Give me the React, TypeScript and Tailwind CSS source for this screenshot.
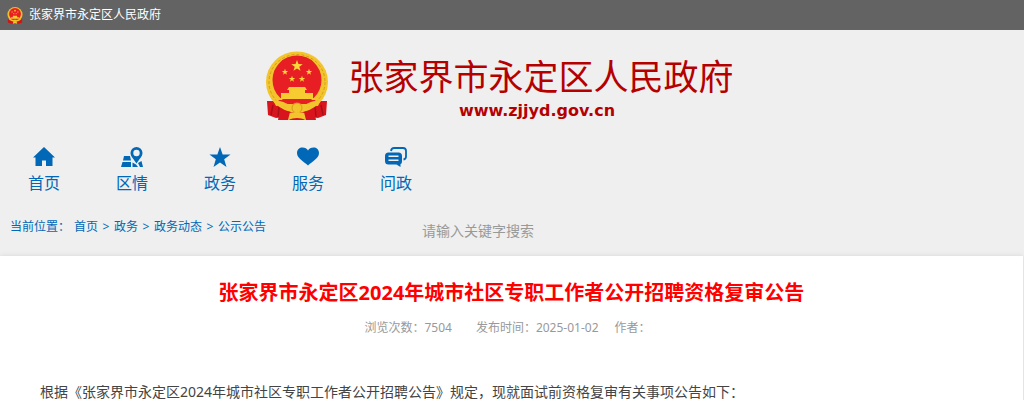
const STAR = "M0 -10 L2.4 -3.2 L9.6 -3.1 L3.8 1.2 L5.9 8.1 L0 4 L-5.9 8.1 L-3.8 1.2 L-9.6 -3.1 L-2.4 -3.2 Z";

const Emblem = ({ className }: { className: string }) => (
    <svg viewBox="0 0 62 70" className={className} aria-hidden="true">
        <path d="M1 50 L61 50 L60 64 L52 67 L44 66 L38 69 L24 69 L18 66 L10 67 L2 64 Z" fill="#d8141c" />
        <path d="M7 54 L5 64 M13 56 L12 66 M49 56 L50 66 M55 54 L57 64" stroke="#a80f16" strokeWidth="1.5" />
        <ellipse cx="31" cy="31" rx="31" ry="30.5" fill="#f3c52c" />
        <ellipse cx="31" cy="31" rx="28" ry="27.5" fill="none" stroke="#d99a1c" strokeWidth="1" strokeDasharray="3 2" />
        <ellipse cx="31" cy="29" rx="24.5" ry="24.5" fill="#e71f24" />
        <path d={STAR} transform="translate(31 15) scale(.6)" fill="#fbd93a" />
        <path d={STAR} transform="translate(19 21) scale(.33)" fill="#fbd93a" />
        <path d={STAR} transform="translate(43 21) scale(.33)" fill="#fbd93a" />
        <path d={STAR} transform="translate(26 28) scale(.33)" fill="#fbd93a" />
        <path d={STAR} transform="translate(36 28) scale(.33)" fill="#fbd93a" />
        <path d="M23 36 H39 L41 39 H21 Z M23 39 H39 V42 H47 V48 H15 V42 H23 Z" fill="#f6cc30" />
        <path d="M12 49 H50 L45 53 H17 Z" fill="#e71f24" />
        <path d="M7 49 Q19 50 24 55 Q31 49 38 55 Q43 50 55 49 L52 55 Q43 54 39 60 L23 60 Q19 54 10 55 Z" fill="#f3c52c" />
        <circle cx="31" cy="57" r="5" fill="#f3c52c" stroke="#d99a1c" />
        <path d="M20 63 Q31 59 42 63 L40 69 Q31 65 22 69 Z" fill="#f3c52c" />
        <path d="M24 61 L22 69 H12 L14 58 Z M38 61 L40 69 H50 L48 58 Z" fill="#d8141c" />
    </svg>
);

const navItems = [
    {
        label: "首页",
        icon: <path d="M11 0 L22 10.500 H19.500 V19 H13 V13.500 H9 V19 H2.500 V10.500 H0 Z" />,
    },
    {
        label: "区情",
        icon: (
            <>
                <path d="M3 9 H9 L10 13.500 H2 Z M1.500 15 L10 15 V20 H0 Z M11.500 15.500 L15 17.500 L17 20 H11.500 Z M17 16 L20.500 14 L22 20 H19 Z" />
                <path
                    fillRule="evenodd"
                    d="M15.500 0 A6 6 0 0 1 21.500 6 C21.500 9.500 17.500 13 15.500 16.500 C13.500 13 9.500 9.500 9.500 6 A6 6 0 0 1 15.500 0 Z M15.500 2.800 A3.200 3.200 0 1 0 15.500 9.200 A3.200 3.200 0 1 0 15.500 2.800 Z"
                />
            </>
        ),
    },
    {
        label: "政务",
        icon: <path d={STAR} transform="translate(11 11) scale(1.1)" />,
    },
    {
        label: "服务",
        icon: <path d="M11 18.500 C7 14.500 0 11.500 0 6 C0 2.500 2.500 0.500 5.500 0.500 C8 0.500 10 1.500 11 3.500 C12 1.500 14 0.500 16.500 0.500 C19.500 0.500 22 2.500 22 6 C22 11.500 15 14.500 11 18.500 Z" />,
    },
    {
        label: "问政",
        icon: (
            <>
                <path d="M6 4 Q6.500 1 9 1 H18 Q21 1 21 4 V9.500 Q21 12 18.500 12.500" fill="none" stroke="currentColor" strokeWidth="1.800" />
                <path
                    fillRule="evenodd"
                    d="M3.500 5.500 H13.500 Q17 5.500 17 9 V14 Q17 17 15.500 17 L15.500 20 L11.500 17.500 H3.500 Q0 17.500 0 14 V9 Q0 5.500 3.500 5.500 Z M3.500 8.500 V10 H13.500 V8.500 Z M3.500 12.500 V14 H13.500 V12.500 Z"
                />
            </>
        ),
    },
];

const crumbs = ["首页", "政务", "政务动态", "公示公告"];

const App = () => {
    return (
        <div className="min-h-screen bg-[#efefef] font-['Noto_Sans','Noto_Sans_CJK_SC',sans-serif] text-[#0068b7]">
            <div className="flex h-[30px] items-center bg-[#636363] px-[7px] text-xs text-white">
                <a href="#" className="flex items-center gap-1.5">
                    <Emblem className="h-[17px] w-4" />
                    张家界市永定区人民政府
                </a>
            </div>

            <header className="flex justify-center pt-[21px] pr-6">
                <a href="#" className="flex gap-5 text-[#b50000]">
                    <Emblem className="h-[70px] w-[62px]" />
                    <div className="flex flex-col items-center">
                        <h1 className="text-[35px] leading-[52px]">张家界市永定区人民政府</h1>
                        <span className="pr-2 font-['DejaVu_Sans',sans-serif] text-base leading-4 font-bold">www.zjjyd.gov.cn</span>
                    </div>
                </a>
            </header>

            <nav className="flex pt-[26px]">
                {navItems.map((item) => (
                    <a key={item.label} href="#" className="flex w-[88px] flex-col items-center gap-1">
                        <svg viewBox="0 0 22 20" className="h-5 w-[22px]" fill="currentColor" aria-hidden="true">
                            {item.icon}
                        </svg>
                        <span className="text-base leading-6">{item.label}</span>
                    </a>
                ))}
            </nav>

            <div className="flex h-[61px] items-start pt-5">
                <div className="flex w-[412px] px-2.5 text-xs leading-6">
                    <span className="w-16">当前位置：</span>
                    {crumbs.map((crumb, i) => (
                        <span key={crumb} className="flex">
                            {i > 0 && <span className="w-4 text-center">&gt;</span>}
                            <a href="#">{crumb}</a>
                        </span>
                    ))}
                </div>
                <input
                    type="text"
                    aria-label="请输入关键字搜索"
                    placeholder="请输入关键字搜索"
                    className="h-[30px] min-w-0 flex-1 bg-transparent px-2.5 text-sm text-[#333] outline-none placeholder:text-[#999]"
                />
            </div>

            <main className="mr-px min-h-36 bg-white px-10 pt-5 text-[#444] shadow-[0_0_5px_rgba(0,0,0,0.1)]">
                <h2 className="text-center text-xl leading-[34px] font-bold text-[#f00]">
                    张家界市永定区2024年城市社区专职工作者公开招聘资格复审公告
                </h2>
                <div className="flex justify-center pt-2 pr-2 text-xs leading-5 text-[#999]">
                    <span className="pr-6">浏览次数：7504</span>
                    <span className="pr-4">发布时间：2025-01-02</span>
                    <span>作者：</span>
                </div>
                <p className="pt-[42px] text-sm leading-6">
                    根据《张家界市永定区2024年城市社区专职工作者公开招聘公告》规定，现就面试前资格复审有关事项公告如下：
                </p>
            </main>
        </div>
    );
};

export default App;
